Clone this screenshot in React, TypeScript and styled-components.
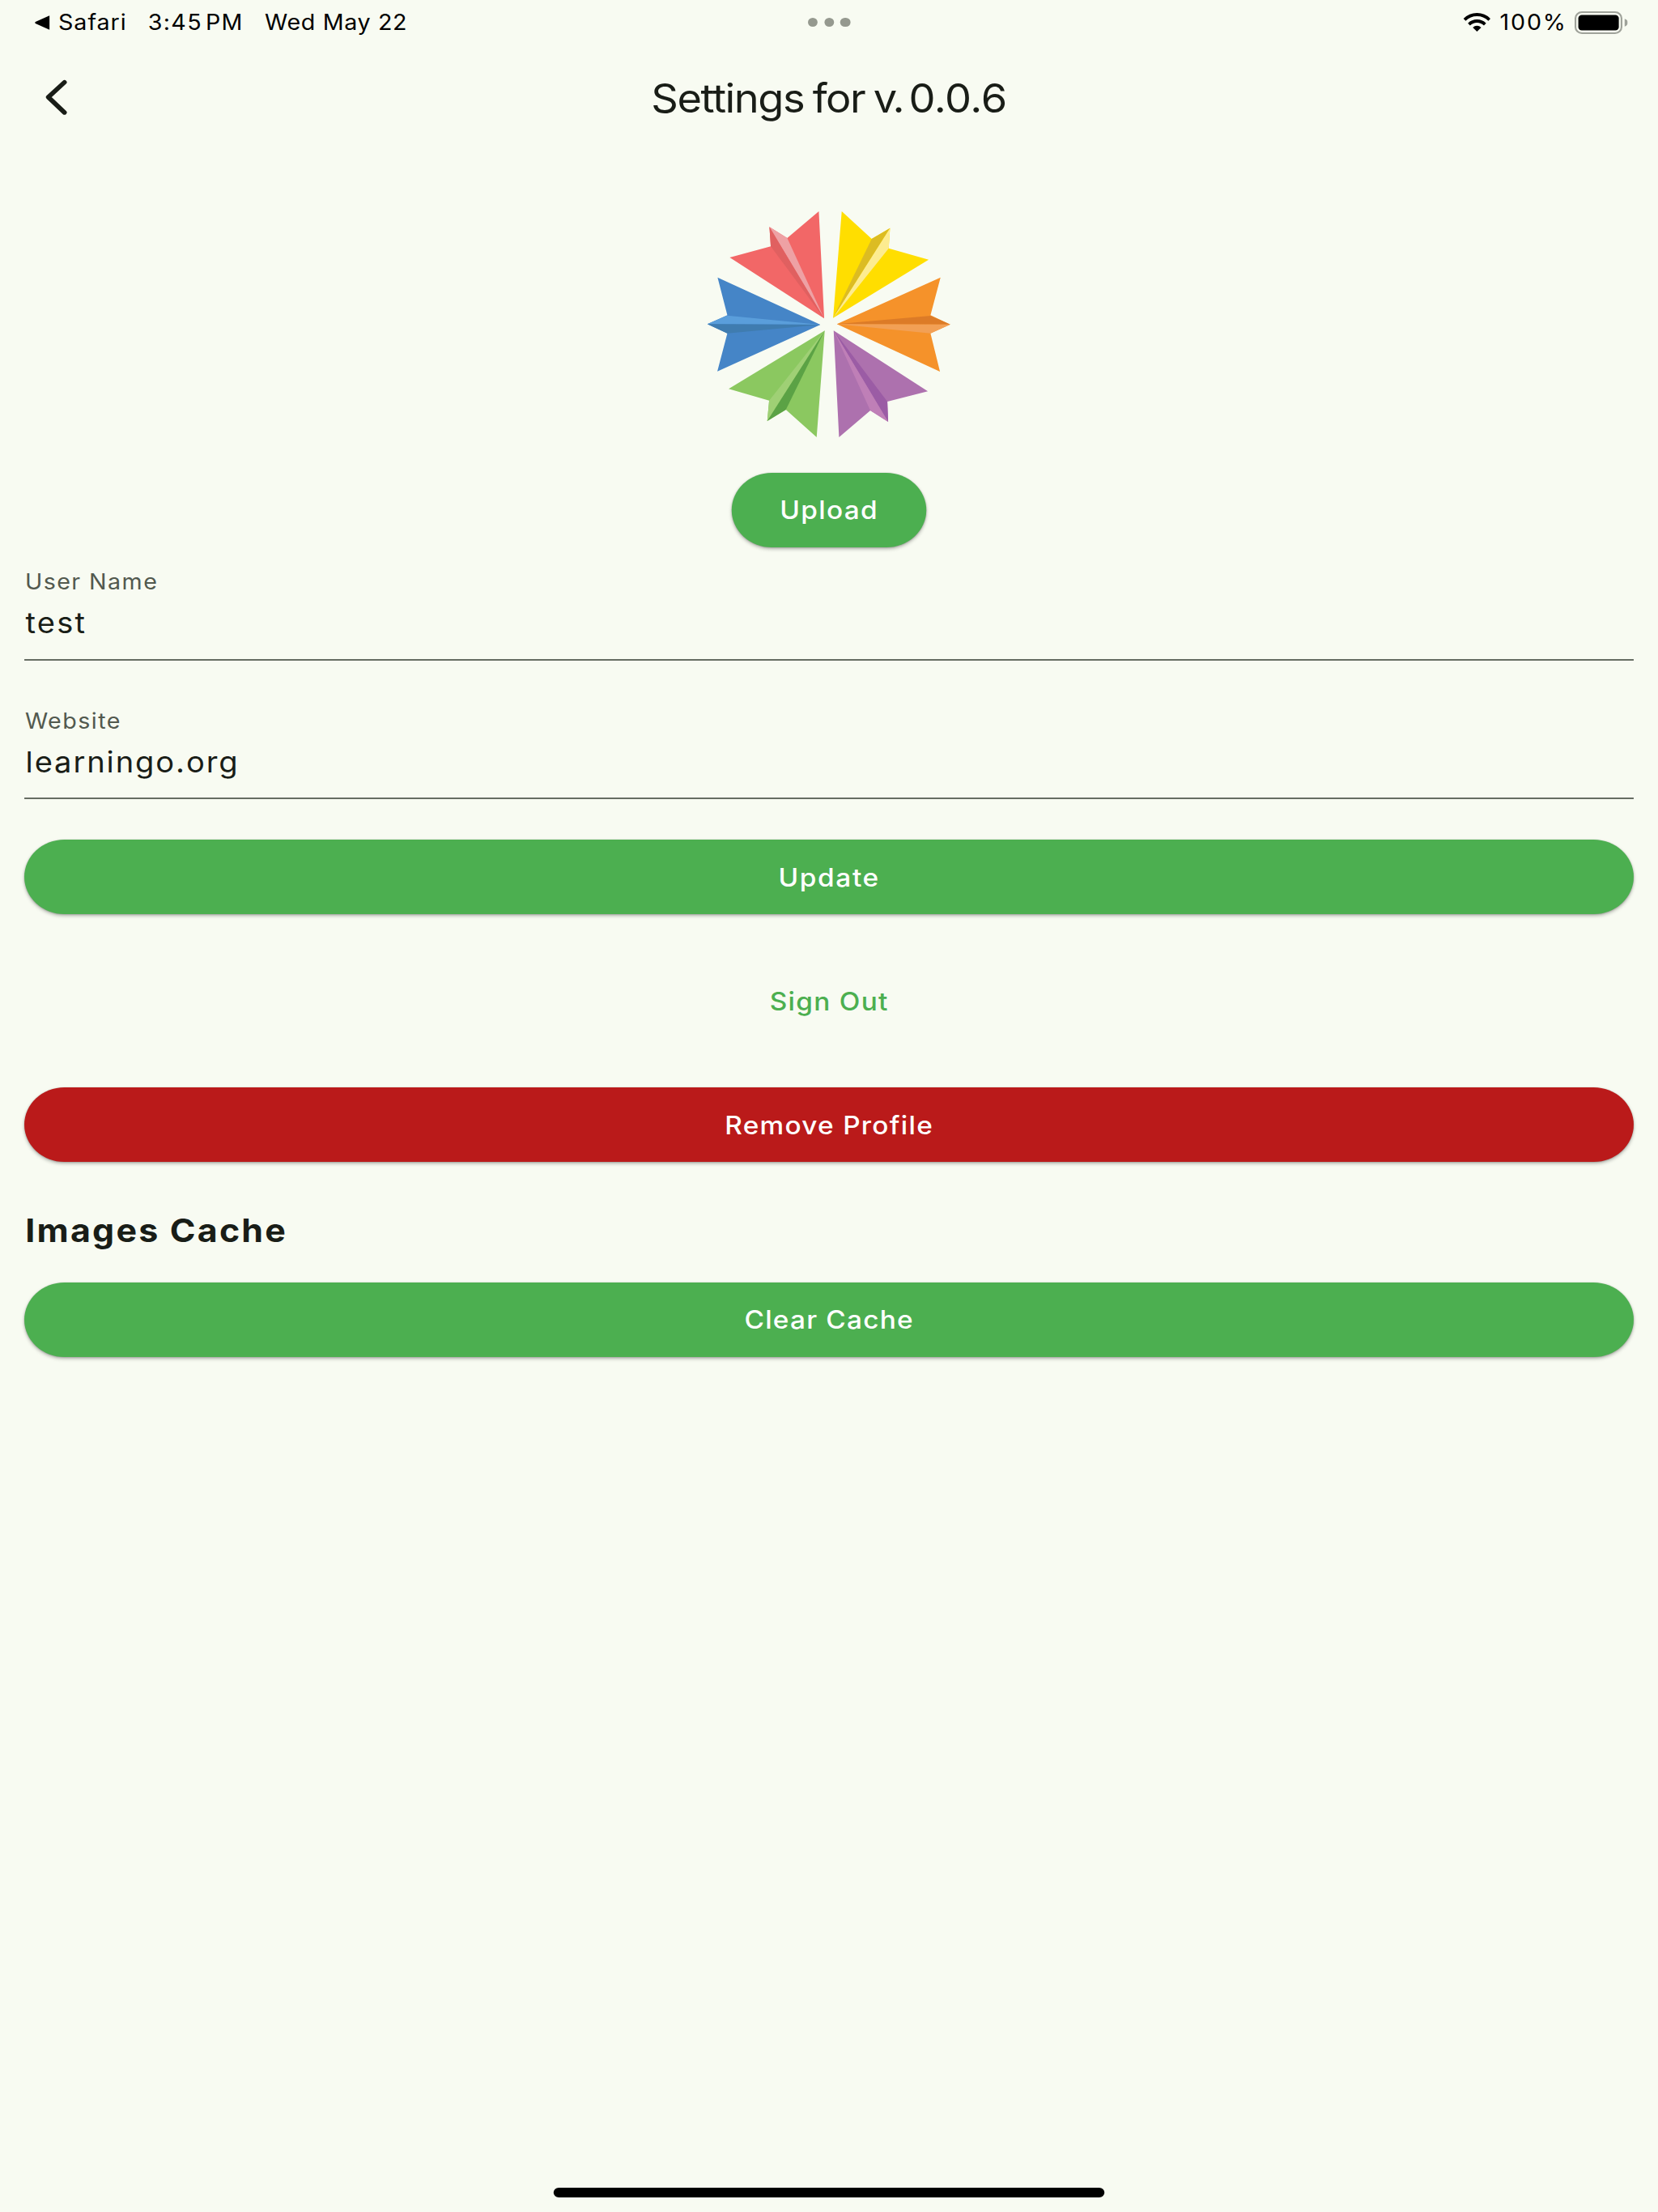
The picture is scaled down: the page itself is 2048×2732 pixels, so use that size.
import React from "react";
import styled, { createGlobalStyle } from "styled-components";

const color = {
  surface: "#f8fbf2",
  ink: "#191d17",
  label: "#52594f",
  outline: "#666d63",
  green: "#4caf50",
  red: "#ba1a1a",
};

const GlobalStyle = createGlobalStyle`
  html, body {
    margin: 0;
    background: ${color.surface};
  }
  body {
    overflow: hidden;
  }
  * {
    box-sizing: border-box;
  }
`;

/* The app is laid out on a 1908px wide canvas and stretched to the full width of the display. */
const Screen = styled.div`
  display: flex;
  flex-direction: column;
  width: 1908px;
  height: 2732px;
  background: ${color.surface};
  color: ${color.ink};
  font-family: Inter, "Liberation Sans", sans-serif;
  font-weight: 400;
  transform: scaleX(1.07338);
  transform-origin: 0 0;
`;

const StatusBar = styled.div`
  display: grid;
  grid-template-columns: 1fr auto 1fr;
  align-items: center;
  height: 55px;
  padding: 0 35px 0 39.5px;
  color: #000;
  font-size: 26.7px;
  line-height: 55px;
  white-space: nowrap;
`;

const StatusLeft = styled.div`
  display: flex;
  align-items: center;
  gap: 24.4px;
`;

const BackToApp = styled.span`
  display: flex;
  align-items: center;
  gap: 10px;
`;

const StatusText = styled.span<{ $spacing: number; $word?: number }>`
  letter-spacing: ${(p) => p.$spacing}px;
  word-spacing: ${(p) => p.$word ?? 0}px;
`;

const Dots = styled.div`
  display: flex;
  gap: 7.2px;
  transform: translateX(-2.2px);
`;

const Dot = styled.span`
  width: 11.4px;
  height: 11.4px;
  border-radius: 50%;
  background: #95998f;
`;

const StatusRight = styled.div`
  display: flex;
  align-items: center;
  justify-content: flex-end;
  gap: 8px;
`;

const Wifi = styled.svg`
  margin-right: 2.9px;
`;

const Header = styled.header`
  display: grid;
  grid-template-columns: 1fr auto 1fr;
  align-items: center;
  height: 130px;
  padding: 0 50px;
`;

const BackButton = styled.button`
  display: flex;
  width: 30px;
  padding: 0;
  border: 0;
  background: none;
  color: ${color.ink};
`;

const Title = styled.h1`
  margin: 0;
  padding-top: 3px;
  font-size: 48.8px;
  font-weight: 400;
  line-height: 60px;
  white-space: pre;
`;

const TitlePart = styled.span<{ $spacing: number; $word?: number }>`
  letter-spacing: ${(p) => p.$spacing}px;
  word-spacing: ${(p) => p.$word ?? 0}px;
`;

const Main = styled.main`
  display: flex;
  flex-direction: column;
  padding: 76px 28px 0;
`;

const Avatar = styled.section`
  display: flex;
  flex-direction: column;
  align-items: center;
  gap: 44px;
`;

const Button = styled.button<{ $tone: "green" | "red" | "text"; $width?: string; $top?: number }>`
  flex: none;
  width: ${(p) => p.$width ?? "100%"};
  height: 91.6px;
  margin-top: ${(p) => p.$top ?? 0}px;
  padding: ${(p) => (p.$width ? 0 : 1.5)}px 0 0;
  border: 0;
  border-radius: 46px;
  background: ${(p) => (p.$tone === "text" ? "transparent" : color[p.$tone])};
  color: ${(p) => (p.$tone === "text" ? color.green : "#fff")};
  box-shadow: ${(p) =>
    p.$tone === "text" ? "none" : "0 2.3px 4.6px rgba(0, 0, 0, 0.26), 0 0.5px 2px rgba(0, 0, 0, 0.22)"};
  font-family: inherit;
  font-size: 31.1px;
  font-weight: 500;
  line-height: 40px;
`;

const ButtonLabel = styled.span<{ $spacing: number }>`
  padding-left: 0.3px;
  letter-spacing: ${(p) => p.$spacing}px;
`;

const Fields = styled.div`
  display: flex;
  flex-direction: column;
  gap: 59px;
  padding-top: 27.9px;
`;

const Field = styled.label`
  display: flex;
  flex-direction: column;
`;

const FieldLabel = styled.span`
  padding-left: 0.8px;
  color: ${color.label};
  font-size: 26.7px;
  line-height: 30px;
  letter-spacing: 1.34px;
`;

const FieldValue = styled.span<{ $spacing: number }>`
  height: 82.5px;
  padding: 16px 0 0 1.4px;
  border-bottom: 2px solid ${color.outline};
  font-size: 35.5px;
  line-height: 42px;
  letter-spacing: ${(p) => p.$spacing}px;
`;

const SectionTitle = styled.h2`
  margin: 61.2px 0 39.9px;
  padding-left: 1.2px;
  font-size: 40px;
  font-weight: 700;
  line-height: 48px;
  letter-spacing: 2.05px;
`;

const HomeIndicator = styled.div`
  width: 634.5px;
  height: 12px;
  margin: auto auto 18px;
  border-radius: 6px;
  background: #000;
`;

type Plane = { body: string; folds: [string, string][]; fill: string };

const planes: Plane[] = [
  {
    fill: "#f26767",
    body: "455,33 475,430 125,204 277,163 272,91 338,132",
    folds: [
      ["272,91 338,132 475,430", "#eea1a4"],
      ["272,91 277,163 475,430", "#e06060"],
    ],
  },
  {
    fill: "#ffde00",
    body: "540,33 651,135 719,95 714,170 862,212 508,428",
    folds: [
      ["719,95 651,135 508,428", "#dcbc22"],
      ["719,95 714,170 508,428", "#fdec90"],
    ],
  },
  {
    fill: "#f5922a",
    body: "906,278 869,418 942,452 869,485 904,627 522,451",
    folds: [
      ["942,452 869,420 522,451", "#dc7b27"],
      ["942,452 869,485 522,451", "#f2a055"],
    ],
  },
  {
    fill: "#ad71ae",
    body: "510,475 859,700 709,738 712,813 646,771 530,870",
    folds: [
      ["712,813 709,738 510,475", "#9b5ca5"],
      ["712,813 646,771 510,475", "#bf7fb7"],
    ],
  },
  {
    fill: "#8bc860",
    body: "477,475 447,870 333,768 264,810 271,734 121,691",
    folds: [
      ["264,810 271,734 477,475", "#9fd075"],
      ["264,810 333,768 477,475", "#5ba245"],
    ],
  },
  {
    fill: "#4585c7",
    body: "80,278 116,418 42,451 116,485 79,626 461,453",
    folds: [
      ["42,451 116,419 461,453", "#5a9edb"],
      ["42,451 116,485 461,453", "#3f7cb0"],
    ],
  },
];

function Logo() {
  return (
    <svg width="279.5" height="279" viewBox="42 33 900 837" preserveAspectRatio="none">
      {planes.map((p) => (
        <g key={p.fill}>
          <polygon points={p.body} fill={p.fill} />
          {p.folds.map(([points, fill]) => (
            <polygon key={fill} points={points} fill={fill} />
          ))}
        </g>
      ))}
    </svg>
  );
}

function WifiIcon() {
  return (
    <Wifi width="31.4" height="23" viewBox="0 0 34 23" preserveAspectRatio="none">
      <g fill="none" stroke="#000" strokeWidth="3.9">
        <path d="M1.5 8.4A22 22 0 0 1 32.5 8.4" />
        <path d="M7 14.1A14.3 14.3 0 0 1 27 14.1" />
      </g>
      <path d="M17 23L11.8 17.9A7.4 7.4 0 0 1 22.2 17.9Z" />
    </Wifi>
  );
}

function BatteryIcon() {
  return (
    <svg width="61.5" height="28" viewBox="0 0 61.5 28">
      <rect x="1" y="1" width="53" height="26" rx="7.5" fill="none" stroke="#9fa29a" strokeWidth="2" />
      <rect x="4.3" y="4.6" width="46.6" height="18.8" rx="4" />
      <path d="M57.6 9.3C60 10 61.3 12 61.3 14C61.3 16 60 18 57.6 18.7Z" fill="#9fa29a" />
    </svg>
  );
}

export default function App() {
  return (
    <>
      <GlobalStyle />
      <Screen>
        <StatusBar>
          <StatusLeft>
            <BackToApp>
              <svg width="17.6" height="18" viewBox="0 0 17.6 18">
                <path d="M16.4 0.4Q17.6 0 17.6 1.2V16.8Q17.6 18 16.4 17.6L0.8 10Q-0.5 9 0.8 8Z" />
              </svg>
              <StatusText $spacing={0.89}>Safari</StatusText>
            </BackToApp>
            <StatusText $spacing={1.2} $word={-4.8}>
              3:45 PM
            </StatusText>
            <StatusText $spacing={0.61}>Wed May 22</StatusText>
          </StatusLeft>
          <Dots>
            <Dot />
            <Dot />
            <Dot />
          </Dots>
          <StatusRight>
            <WifiIcon />
            <StatusText $spacing={1.7}>100%</StatusText>
            <BatteryIcon />
          </StatusRight>
        </StatusBar>

        <Header>
          <BackButton aria-label="Back">
            <svg width="30" height="50" viewBox="0 0 30 50" fill="none">
              <path
                d="M24.2 6.6L5.6 25L24.2 44"
                stroke="currentColor"
                strokeWidth="5.4"
                strokeLinecap="round"
                strokeLinejoin="round"
              />
            </svg>
          </BackButton>
          <Title>
            <TitlePart $spacing={-1.35} $word={-2.6}>{"Settings for "}</TitlePart>
            <TitlePart $spacing={-3.2}>v.</TitlePart>
            <TitlePart $spacing={-0.4} $word={-5.6}>{" 0.0.6"}</TitlePart>
          </Title>
        </Header>

        <Main>
          <Avatar>
            <Logo />
            <Button $tone="green" $width="224.6px">
              <ButtonLabel $spacing={1.25}>Upload</ButtonLabel>
            </Button>
          </Avatar>

          <Fields>
            <Field>
              <FieldLabel>User Name</FieldLabel>
              <FieldValue $spacing={2}>test</FieldValue>
            </Field>
            <Field>
              <FieldLabel>Website</FieldLabel>
              <FieldValue $spacing={1.75}>learningo.org</FieldValue>
            </Field>
          </Fields>

          <Button $tone="green" $top={50}>
            <ButtonLabel $spacing={1.5}>Update</ButtonLabel>
          </Button>
          <Button $tone="text" $top={61.3}>
            <ButtonLabel $spacing={1.21}>Sign Out</ButtonLabel>
          </Button>
          <Button $tone="red" $top={61.3}>
            <ButtonLabel $spacing={1.19}>Remove Profile</ButtonLabel>
          </Button>

          <SectionTitle>Images Cache</SectionTitle>
          <Button $tone="green">
            <ButtonLabel $spacing={1.12}>Clear Cache</ButtonLabel>
          </Button>
        </Main>

        <HomeIndicator />
      </Screen>
    </>
  );
}
